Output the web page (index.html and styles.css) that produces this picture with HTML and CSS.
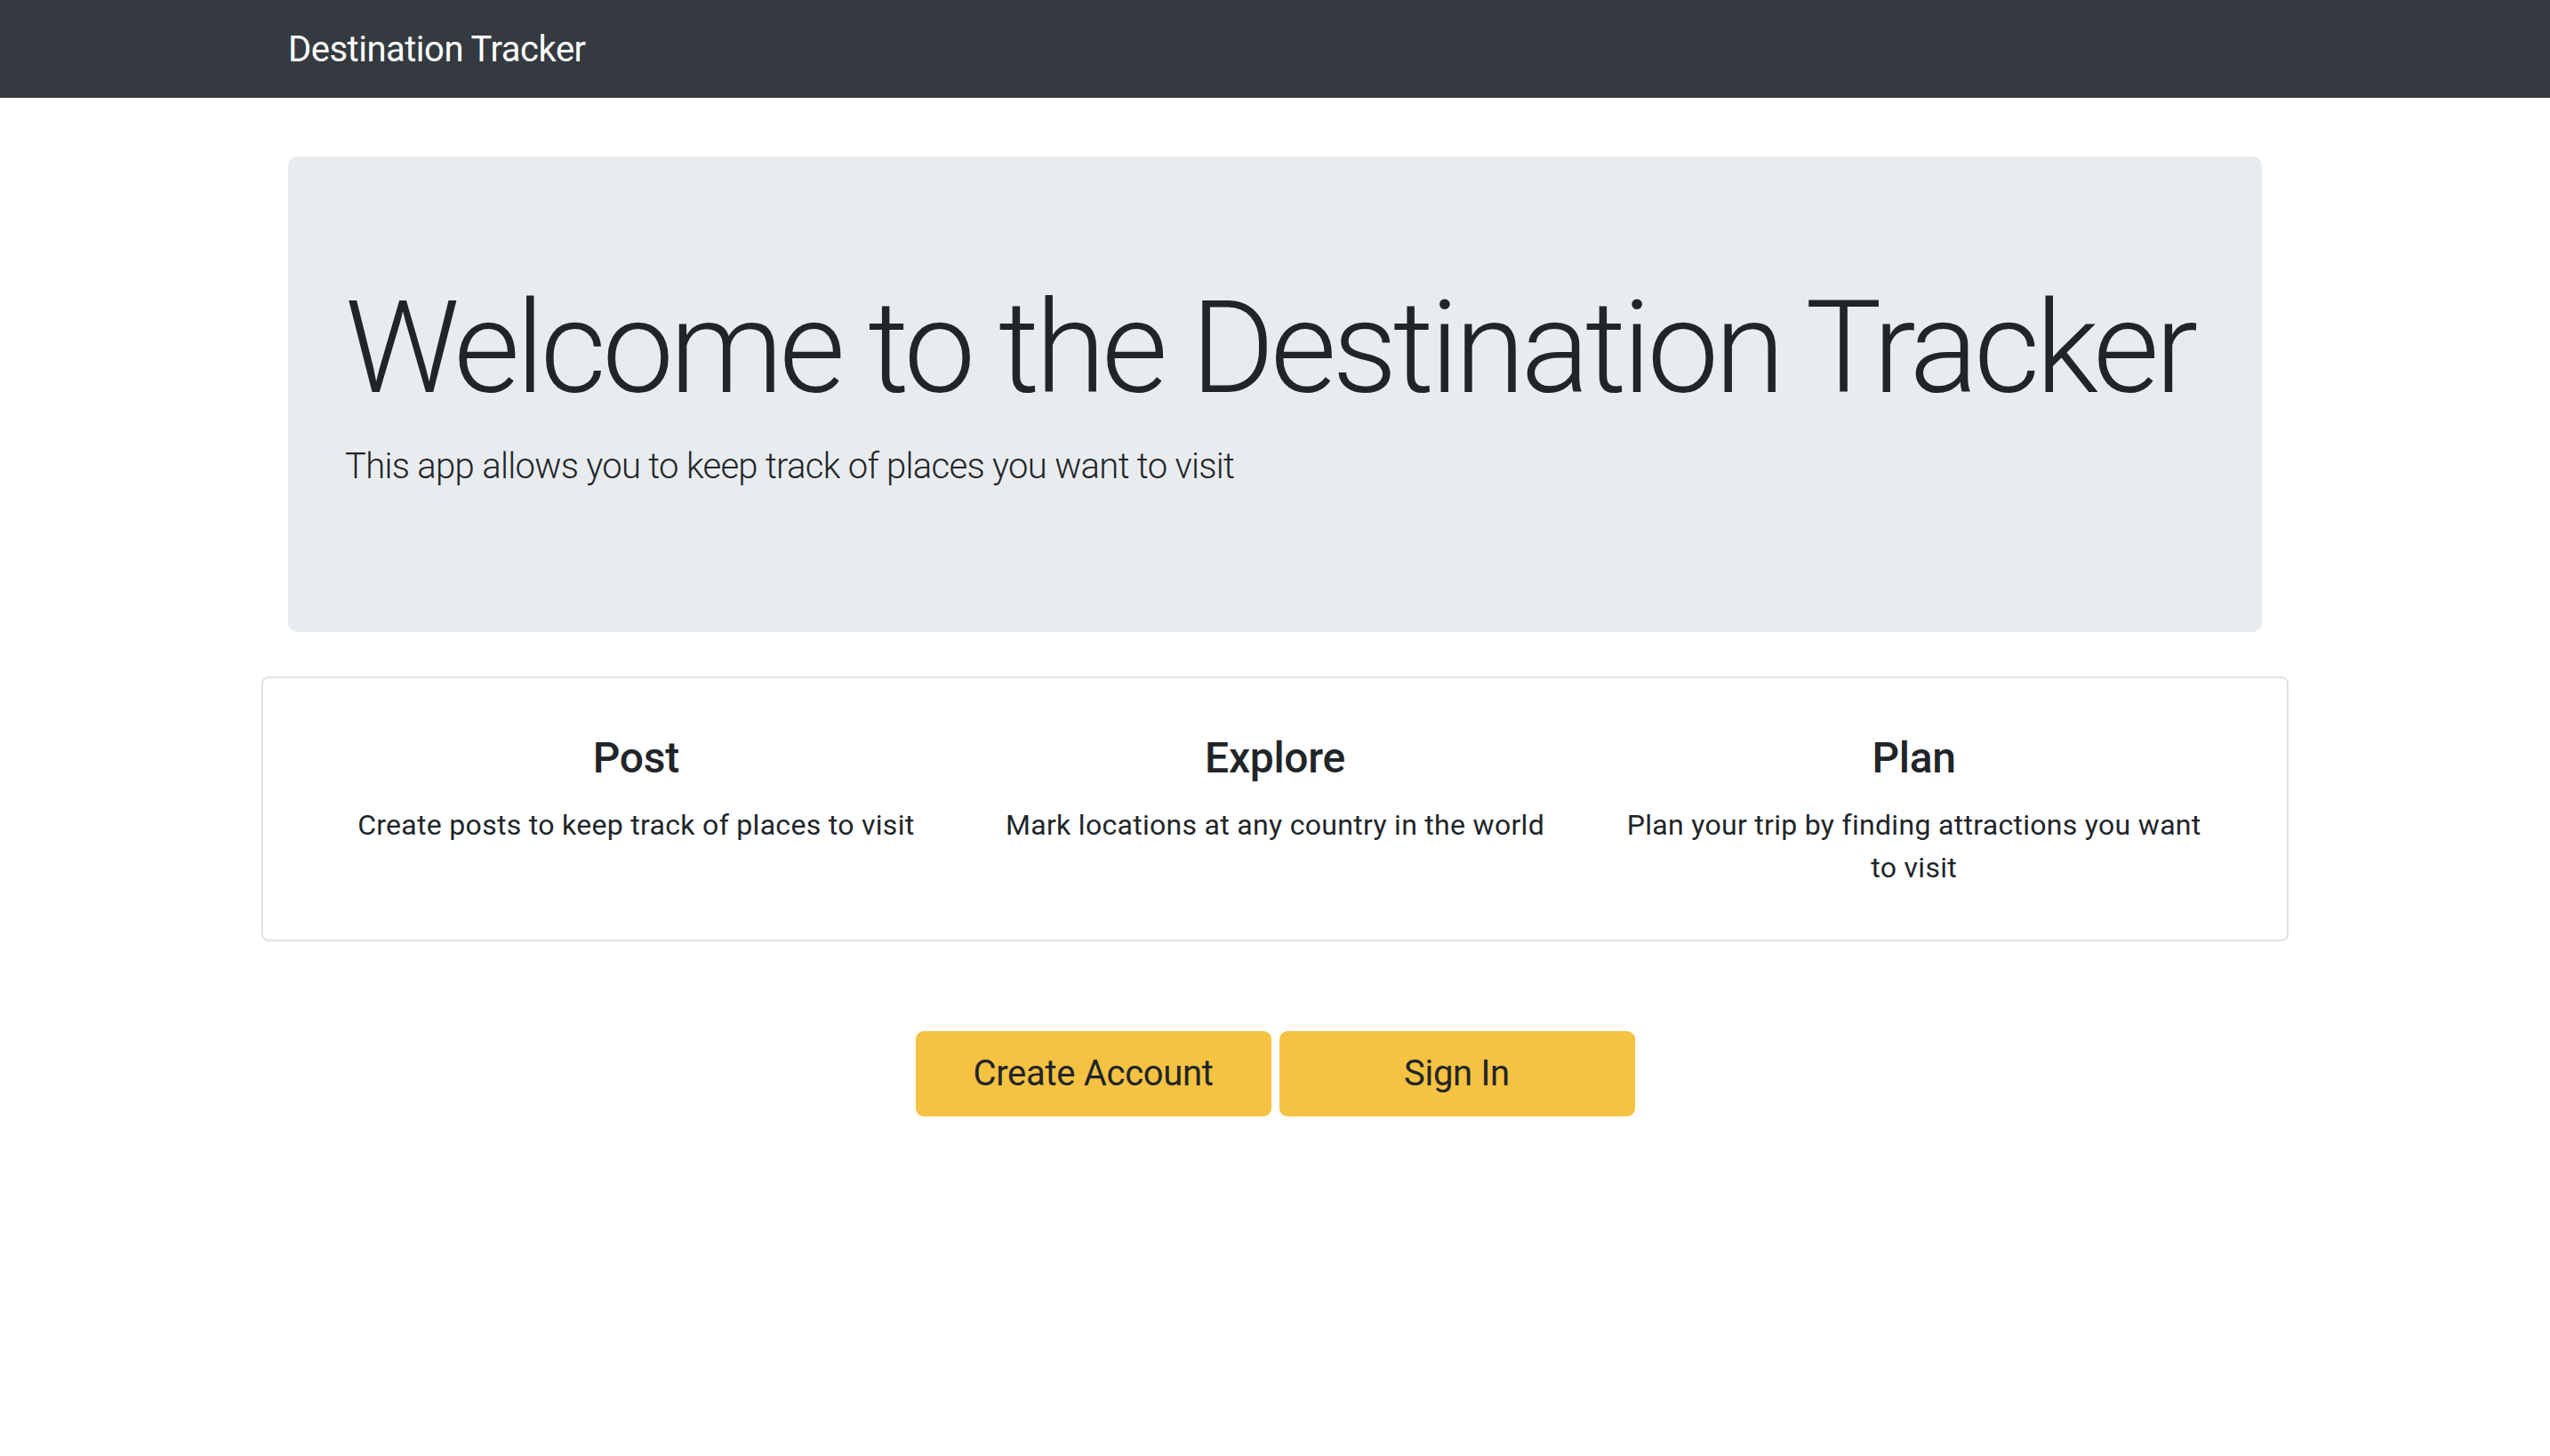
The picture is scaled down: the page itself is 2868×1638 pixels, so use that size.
FILE: index.html
```html
<!DOCTYPE html>
<html lang="en">
<head>
<meta charset="utf-8">
<title>Destination Tracker</title>
<link rel="stylesheet" href="styles.css">
</head>
<body>
<nav class="navbar">
  <div class="container">
    <a class="brand" href="#">Destination Tracker</a>
  </div>
</nav>
<main class="container">
  <section class="jumbotron">
    <h1 class="display">Welcome to the Destination Tracker</h1>
    <p class="lead">This app allows you to keep track of places you want to visit</p>
  </section>
</main>
<div class="wide">
  <section class="card">
    <div class="feature">
      <h4>Post</h4>
      <p>Create posts to keep track of places to visit</p>
    </div>
    <div class="feature">
      <h4>Explore</h4>
      <p>Mark locations at any country in the world</p>
    </div>
    <div class="feature">
      <h4>Plan</h4>
      <p>Plan your trip by finding attractions you want to visit</p>
    </div>
  </section>
  <div class="actions">
    <a class="btn" href="#">Create Account</a>
    <a class="btn" href="#">Sign In</a>
  </div>
</div>
</body>
</html>
```

FILE: styles.css
```css
* { box-sizing: border-box; }
html, body { margin: 0; padding: 0; }
body {
  font-family: Roboto, "Liberation Sans", sans-serif;
  font-size: 32px;
  line-height: 1.5;
  color: #212529;
  background: #fff;
}
.container {
  width: 2280px;
  margin: 0 auto;
  padding: 0 30px;
}
.navbar {
  background: #343a40;
  height: 110px;
  display: flex;
  align-items: center;
}
.brand {
  color: #fff;
  text-decoration: none;
  font-size: 40px;
  line-height: 60px;
  letter-spacing: -0.5px;
  position: relative;
  top: 1px;
}
.jumbotron {
  margin-top: 66px;
  background: #e9ecef;
  border-radius: 10px;
  padding: 130px 64px 126px;
  height: 535px;
}
.display {
  margin: 0 0 16px;
  font-size: 144px;
  font-weight: 300;
  line-height: 1.2;
  letter-spacing: -4.7px;
  white-space: nowrap;
}
.lead {
  margin: 0;
  font-size: 40px;
  font-weight: 300;
  line-height: 1.5;
  letter-spacing: -0.7px;
}
.wide {
  width: 2280px;
  margin: 0 auto;
}
.card {
  margin-top: 50px;
  border: 2px solid #dfe2e6;
  border-radius: 8px;
  height: 298px;
  padding: 61px 60px 0;
  display: grid;
  grid-template-columns: repeat(3, 1fr);
}
.feature {
  padding: 0 30px;
  text-align: center;
}
.feature h4 {
  margin: 0 0 22px;
  font-size: 48px;
  font-weight: 500;
  line-height: 1.2;
  letter-spacing: -0.3px;
}
.feature p {
  margin: 0;
  line-height: 48px;
  letter-spacing: 0.3px;
}
.actions {
  margin-top: 101px;
  display: flex;
  justify-content: center;
  gap: 9px;
}
.btn {
  width: 400px;
  height: 96px;
  display: flex;
  align-items: center;
  justify-content: center;
  background: #f5c242;
  color: #212529;
  text-decoration: none;
  font-size: 40px;
  letter-spacing: -0.3px;
  border-radius: 9px;
}
```
